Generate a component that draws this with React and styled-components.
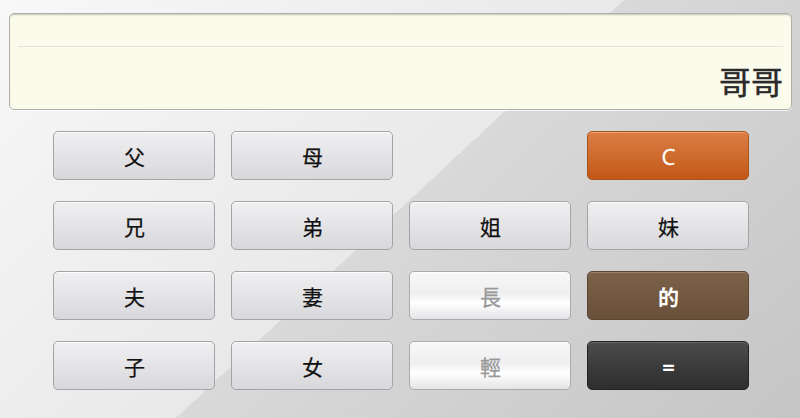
import React from "react";
import styled, { createGlobalStyle, css } from "styled-components";

const GlobalStyle = createGlobalStyle`
  html, body {
    margin: 0;
    padding: 0;
  }
  body {
    font-family: "Noto Sans CJK TC", "Noto Sans", sans-serif;
  }
`;

const Page = styled.div`
  width: 800px;
  height: 418px;
  box-sizing: border-box;
  padding: 13px 8px 0 9px;
  background: linear-gradient(
    137deg,
    #f8f8f8 0%,
    #e9e9e9 50%,
    #d9d9d9 50%,
    #c5c5c5 100%
  );
  overflow: hidden;
`;

const Display = styled.div`
  height: 97px;
  box-sizing: border-box;
  border: 1px solid #b0b0a8;
  border-radius: 5px;
  background: #fbfbeb;
  box-shadow: inset 0 2px 2px -1px rgba(0, 0, 0, 0.22),
    0 1px 0 rgba(255, 255, 255, 0.7);
  padding: 0 8px;
  display: flex;
  flex-direction: column;
`;

const Expression = styled.div`
  height: 32px;
  border-bottom: 1px solid #e2e2d6;
`;

const Result = styled.div`
  flex: 1;
  display: flex;
  align-items: flex-end;
  justify-content: flex-end;
  padding-bottom: 13px;
  font-size: 32px;
  line-height: 32px;
  color: #2a2a2a;
  -webkit-text-stroke: 0.45px #2a2a2a;
  font-family: "Noto Sans CJK TC", sans-serif;
`;

const Keypad = styled.div`
  display: grid;
  grid-template-columns: repeat(4, 162px);
  grid-auto-rows: 49px;
  column-gap: 16px;
  row-gap: 21px;
  margin: 21px 0 0 44px;
`;

const variants = {
  normal: css`
    color: #111;
    -webkit-text-stroke: 0.25px #111;
    border-color: #a4a4a6;
    background: linear-gradient(#f0f0f2, #e2e2e5 60%, #d8d8dc);
    box-shadow: inset 0 1px 0 rgba(255, 255, 255, 0.8);
  `,
  light: css`
    color: #999;
    -webkit-text-stroke: 0.3px #999;
    border-color: #aaaaac;
    background: linear-gradient(
      #f8f8f9,
      #efeff1 45%,
      #ffffff 66%,
      #e4e4e7 100%
    );
    box-shadow: inset 0 1px 0 rgba(255, 255, 255, 0.9);
  `,
  clear: css`
    color: #fff;
    font-family: "Open Sans", "Noto Sans", sans-serif;
    font-size: 22px;
    -webkit-text-stroke: 0.3px #fff;
    border-color: #a6541d;
    background: linear-gradient(#dc7d45, #cd6a2c 55%, #c35817);
    box-shadow: inset 0 1px 0 rgba(255, 200, 160, 0.5);
  `,
  of: css`
    color: #fff;
    font-weight: 700;
    border-color: #5b4533;
    background: linear-gradient(#7d624a, #715740 60%, #6a503a);
    box-shadow: inset 0 1px 0 rgba(255, 230, 200, 0.25);
  `,
  equals: css`
    color: #fff;
    font-family: "Open Sans", "Noto Sans", sans-serif;
    font-weight: 700;
    font-size: 22px;
    border-color: #222;
    background: linear-gradient(#4c4c4c, #3a3a3a 55%, #2e2e2e);
    box-shadow: inset 0 1px 0 rgba(255, 255, 255, 0.15);
  `,
};

const Key = styled.button`
  display: flex;
  align-items: center;
  justify-content: center;
  box-sizing: border-box;
  height: 49px;
  padding: 1px 0 0 1px;
  border: 1px solid;
  border-radius: 5px;
  font-family: "Noto Sans CJK TC", sans-serif;
  font-size: 21px;
  line-height: 1;
  cursor: pointer;
  grid-column: ${(props) => props.col || "auto"};
  ${(props) => variants[props.variant || "normal"]}
`;

const keys = [
  { label: "父" },
  { label: "母" },
  { label: "C", variant: "clear", col: 4 },
  { label: "兄" },
  { label: "弟" },
  { label: "姐" },
  { label: "妹" },
  { label: "夫" },
  { label: "妻" },
  { label: "長", variant: "light" },
  { label: "的", variant: "of" },
  { label: "子" },
  { label: "女" },
  { label: "輕", variant: "light" },
  { label: "=", variant: "equals" },
];

const App = () => (
  <Page>
    <GlobalStyle />
    <Display>
      <Expression />
      <Result>哥哥</Result>
    </Display>
    <Keypad>
      {keys.map((k) => (
        <Key key={k.label} variant={k.variant} col={k.col}>
          {k.label}
        </Key>
      ))}
    </Keypad>
  </Page>
);

export default App;
